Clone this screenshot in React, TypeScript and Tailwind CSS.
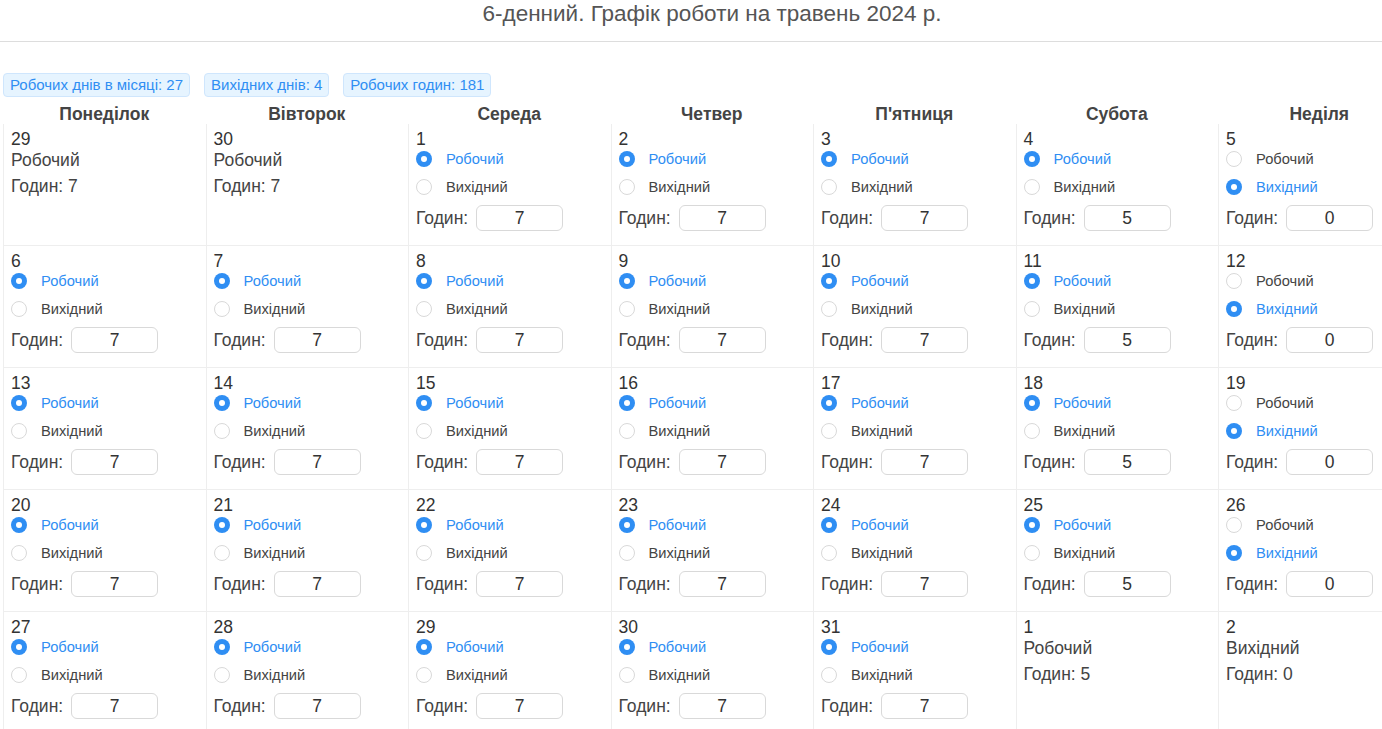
import React from 'react';

type Day = { n: number; inactive?: boolean; work: boolean; hours: number };

const weekDays = ['Понеділок', 'Вівторок', 'Середа', 'Четвер', "П'ятниця", 'Субота', 'Неділя'];

function buildRows(): Day[][] {
  const all: Day[] = [];
  all.push({ n: 29, inactive: true, work: true, hours: 7 });
  all.push({ n: 30, inactive: true, work: true, hours: 7 });
  for (let d = 1; d <= 31; d++) {
    const idx = all.length % 7;
    if (idx === 6) all.push({ n: d, work: false, hours: 0 });
    else if (idx === 5) all.push({ n: d, work: true, hours: 5 });
    else all.push({ n: d, work: true, hours: 7 });
  }
  all.push({ n: 1, inactive: true, work: true, hours: 5 });
  all.push({ n: 2, inactive: true, work: false, hours: 0 });
  const rows: Day[][] = [];
  for (let i = 0; i < all.length; i += 7) rows.push(all.slice(i, i + 7));
  return rows;
}

function Radio({ checked, label }: { checked: boolean; label: string }) {
  return (
    <div className="flex items-center h-[22px]">
      {checked ? (
        <span className="w-4 h-4 rounded-full bg-[#2f8ef3] flex items-center justify-center">
          <span className="w-[6px] h-[6px] rounded-full bg-white" />
        </span>
      ) : (
        <span className="w-4 h-4 rounded-full border border-[#d9d9d9] bg-white" />
      )}
      <span className={`ml-[14px] text-[14.7px] ${checked ? 'text-[#2f8ef3]' : 'text-[#444]'}`}>{label}</span>
    </div>
  );
}

function DayCell({ day, first }: { day: Day; first: boolean }) {
  return (
    <div className={`border-l border-[#eeeeee] px-[7px] pt-[6px] ${first ? 'h-[121px]' : 'h-[122px] border-t'}`}>
      <div className="text-[17.5px] leading-[18px] text-[#333]">{day.n}</div>
      {day.inactive ? (
        <>
          <div className="text-[17.5px] leading-[24px] text-[#444]">{day.work ? 'Робочий' : 'Вихідний'}</div>
          <div className="text-[17.5px] leading-[24px] mt-[2px] text-[#444]">Годин: {day.hours}</div>
        </>
      ) : (
        <>
          <Radio checked={day.work} label="Робочий" />
          <div className="mt-[6px]">
            <Radio checked={!day.work} label="Вихідний" />
          </div>
          <div className="flex items-center gap-[8px] mt-[7px]">
            <span className="text-[17.5px] text-[#444]">Годин:</span>
            <div className="w-[87px] h-[26px] border border-[#d9d9d9] rounded-md flex items-center justify-center text-[17.5px] text-[#333]">
              {day.hours}
            </div>
          </div>
        </>
      )}
    </div>
  );
}

export default function App() {
  const rows = buildRows();
  return (
    <div className="w-[1382px] h-[729px] overflow-hidden bg-white text-[#444]" style={{ fontFamily: '"Liberation Sans", Arial, sans-serif' }}>
      <div className="w-[1424px]">
        <div className="h-[41px] text-center text-[22.5px] leading-[28px] text-[#555]">
          6-денний. Графік роботи на травень 2024 р.
        </div>
        <div className="h-px bg-[#dddddd]" />
        <div className="pl-[3px]">
          <div className="flex gap-[14px] mt-[31px]">
            <span className="h-6 px-[6px] flex items-center rounded border border-[#cfe6fd] bg-[#e6f4ff] text-[15px] text-[#2f8ef3]">Робочих днів в місяці: 27</span>
            <span className="h-6 px-[6px] flex items-center rounded border border-[#cfe6fd] bg-[#e6f4ff] text-[15px] text-[#2f8ef3]">Вихідних днів: 4</span>
            <span className="h-6 px-[6px] flex items-center rounded border border-[#cfe6fd] bg-[#e6f4ff] text-[15px] text-[#2f8ef3]">Робочих годин: 181</span>
          </div>
          <div className="grid grid-cols-[repeat(7,202.5px)] mt-[3px]">
            {weekDays.map((w) => (
              <div key={w} className="h-6 leading-[28px] text-center font-bold text-[17.5px] text-[#444]">{w}</div>
            ))}
          </div>
          <div className="grid grid-cols-[repeat(7,202.5px)]">
            {rows.map((row, ri) =>
              row.map((day, ci) => <DayCell key={`${ri}-${ci}`} day={day} first={ri === 0} />)
            )}
          </div>
        </div>
      </div>
    </div>
  );
}
